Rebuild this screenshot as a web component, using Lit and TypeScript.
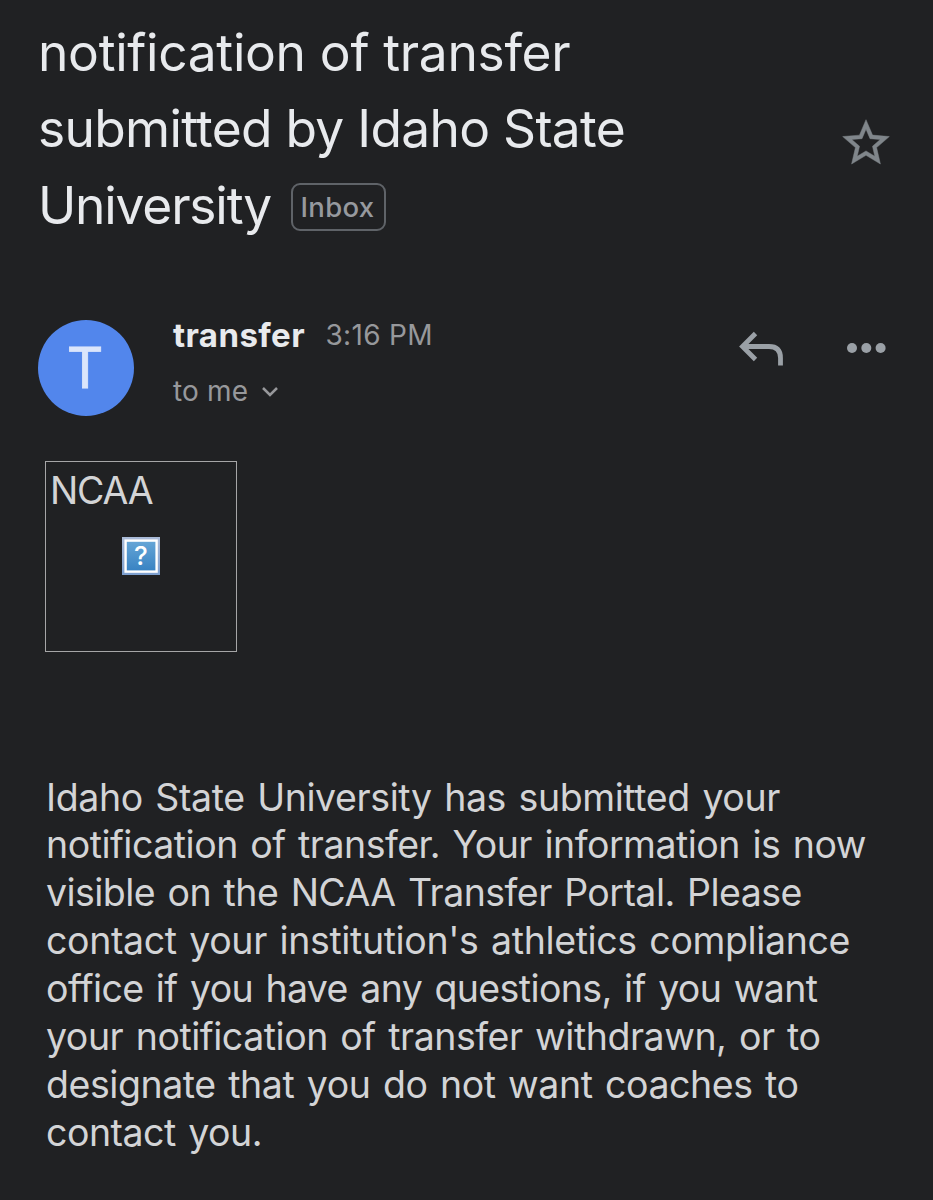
import { LitElement, html, css } from "lit";
import { customElement } from "lit/decorators.js";
import { styleMap } from "lit/directives/style-map.js";

@customElement("mail-subject")
class MailSubject extends LitElement {
  static styles = css`
    :host { display: flex; justify-content: space-between; height: 242px; padding: 14px 39px 0 38px; box-sizing: border-box; }
    h1 { margin: 0; font-weight: 400; font-size: 51.5px; line-height: 76.3px; color: #e8eaed; white-space: nowrap; }
    .line { display: block; }
    .l1 { letter-spacing: -0.33px; }
    .l2 { letter-spacing: -0.72px; }
    .last { display: flex; align-items: center; gap: 20px; letter-spacing: -1.2px; }
    .label { box-sizing: border-box; width: 95px; height: 48px; margin-top: 4px; border: 2px solid #5f6368; border-radius: 9px; display: flex; align-items: center; justify-content: center; font: 500 27.5px/44px Inter, sans-serif; letter-spacing: 0.3px; color: #96999e; }
    .label span { margin-right: 2px; }
    .star { margin-top: 101px; width: 56px; height: 56px; fill: #80868b; stroke: #80868b; stroke-width: 0.2; }
  `;
  render() {
    return html`
      <h1>
        <span class="line l1">notification of transfer</span>
        <span class="line l2">submitted by Idaho State</span>
        <span class="line last"><span>University</span><span class="label"><span>Inbox</span></span></span>
      </h1>
      <svg class="star" viewBox="0 0 24 24">
        <path d="M22 9.24l-7.19-.62L12 2 9.19 8.63 2 9.24l5.46 4.73L5.82 21 12 17.27 18.18 21l-1.63-7.03L22 9.24zM12 15.4l-3.76 2.27 1-4.28-3.32-2.88 4.38-.38L12 6.1l1.71 4.04 4.38.38-3.32 2.88 1 4.28L12 15.4z"/>
      </svg>`;
  }
}

@customElement("mail-sender")
class MailSender extends LitElement {
  static styles = css`
    :host { display: flex; align-items: flex-start; height: 219px; padding: 77.5px 47.5px 0 38px; box-sizing: border-box; color: #97989b; }
    .avatar { width: 96px; height: 96px; border-radius: 50%; background: #5286ec; color: #dbe5fb; display: flex; align-items: center; justify-content: center; font: 400 57px/96px Roboto, sans-serif; -webkit-text-stroke: 0.8px #dbe5fb; flex: none; }
    .avatar span { margin: 3px 2px 0 0; }
    .who { margin: -2px 0 0 39px; flex: 1; white-space: nowrap; }
    .row { display: flex; align-items: flex-start; height: 56px; line-height: 34px; }
    .name { font-size: 33px; font-weight: 700; color: #e8eaed; letter-spacing: 0.4px; }
    .time { margin-left: 20.5px; font-size: 28px; letter-spacing: 0.3px; }
    .to { font-size: 28px; display: flex; align-items: center; gap: 13px; line-height: 34px; letter-spacing: 0.15px; }
    .chev { width: 18px; height: 12px; margin-top: 3px; fill: none; stroke: #97989b; stroke-width: 2.5; }
    .reply { width: 46px; height: 38px; margin-top: 9.5px; fill: none; stroke: #9aa0a6; stroke-width: 4.8; }
    .more { width: 40px; height: 14px; margin: 21.5px 0 0 62px; fill: #9aa0a6; }
  `;
  render() {
    return html`
      <div class="avatar"><span>T</span></div>
      <div class="who">
        <div class="row"><span class="name">transfer</span><span class="time">3:16 PM</span></div>
        <div class="to"><span>to me</span><svg class="chev" viewBox="0 0 18 12"><path d="m2 2 7 7 7-7"/></svg></div>
      </div>
      <svg class="reply" viewBox="0 0 46 38"><path d="M17.5 4.5 4.5 17.5l13 13M5 17.5h26q11.5 0 11.5 11.5v7.5"/></svg>
      <svg class="more" viewBox="0 0 40 14"><circle cx="6" cy="7" r="5"/><circle cx="20.3" cy="7" r="5"/><circle cx="34.6" cy="7" r="5"/></svg>`;
  }
}

@customElement("mail-body")
class MailBody extends LitElement {
  static styles = css`
    :host { display: block; padding: 0 45px; color: #d3d4d6; font-size: 37.5px; }
    .image { box-sizing: border-box; width: 192px; height: 191px; border: 1px solid #a6a6a7; display: flex; flex-direction: column; align-items: center; }
    .alt { align-self: flex-start; line-height: 46px; padding: 6px 0 0 4px; letter-spacing: -1.2px; }
    .missing { width: 38px; height: 38px; margin-top: 23px; }
    .q { font: 500 26px Inter, sans-serif; fill: #fff; text-anchor: middle; }
    p { margin: 121.5px 0 0 1px; line-height: 47.86px; white-space: nowrap; word-spacing: 2.4px; }
    .line { display: block; }
  `;
  private lines: [string, number][] = [
    ["Idaho State University has submitted your", -0.4],
    ["notification of transfer. Your information is now", -0.5],
    ["visible on the NCAA Transfer Portal. Please", -0.54],
    ["contact your institution's athletics compliance", -0.37],
    ["office if you have any questions, if you want", -0.61],
    ["your notification of transfer withdrawn, or to", -0.47],
    ["designate that you do not want coaches to", -0.44],
    ["contact you.", -0.5],
  ];
  render() {
    return html`
      <div class="image">
        <span class="alt">NCAA</span>
        <svg class="missing" viewBox="0 0 38 38">
          <defs><linearGradient id="g" x1="0" y1="0" x2="0" y2="1"><stop offset="0" stop-color="#65a5d6"/><stop offset="1" stop-color="#3983c3"/></linearGradient>
          <linearGradient id="f" x1="0" y1="0" x2="0" y2="1"><stop offset="0" stop-color="#aabbd8"/><stop offset="1" stop-color="#7c9fcf"/></linearGradient></defs>
          <rect width="38" height="38" fill="url(#f)"/>
          <rect x="2.4" y="2.4" width="33.4" height="33.4" fill="#fff"/>
          <rect x="4.8" y="4.8" width="28.6" height="28.6" fill="url(#g)"/>
          <text class="q" x="18.8" y="28">?</text>
        </svg>
      </div>
      <p>${this.lines.map(([t, ls]) => html`<span class="line" style=${styleMap({ letterSpacing: `${ls}px` })}>${t}</span>`)}</p>`;
  }
}

@customElement("app-root")
class AppRoot extends LitElement {
  static styles = css`
    :host { display: block; height: 1200px; overflow: hidden; background: #202123; font-family: Inter, "Liberation Sans", sans-serif; }
  `;
  render() {
    return html`<mail-subject></mail-subject><mail-sender></mail-sender><mail-body></mail-body>`;
  }
}
